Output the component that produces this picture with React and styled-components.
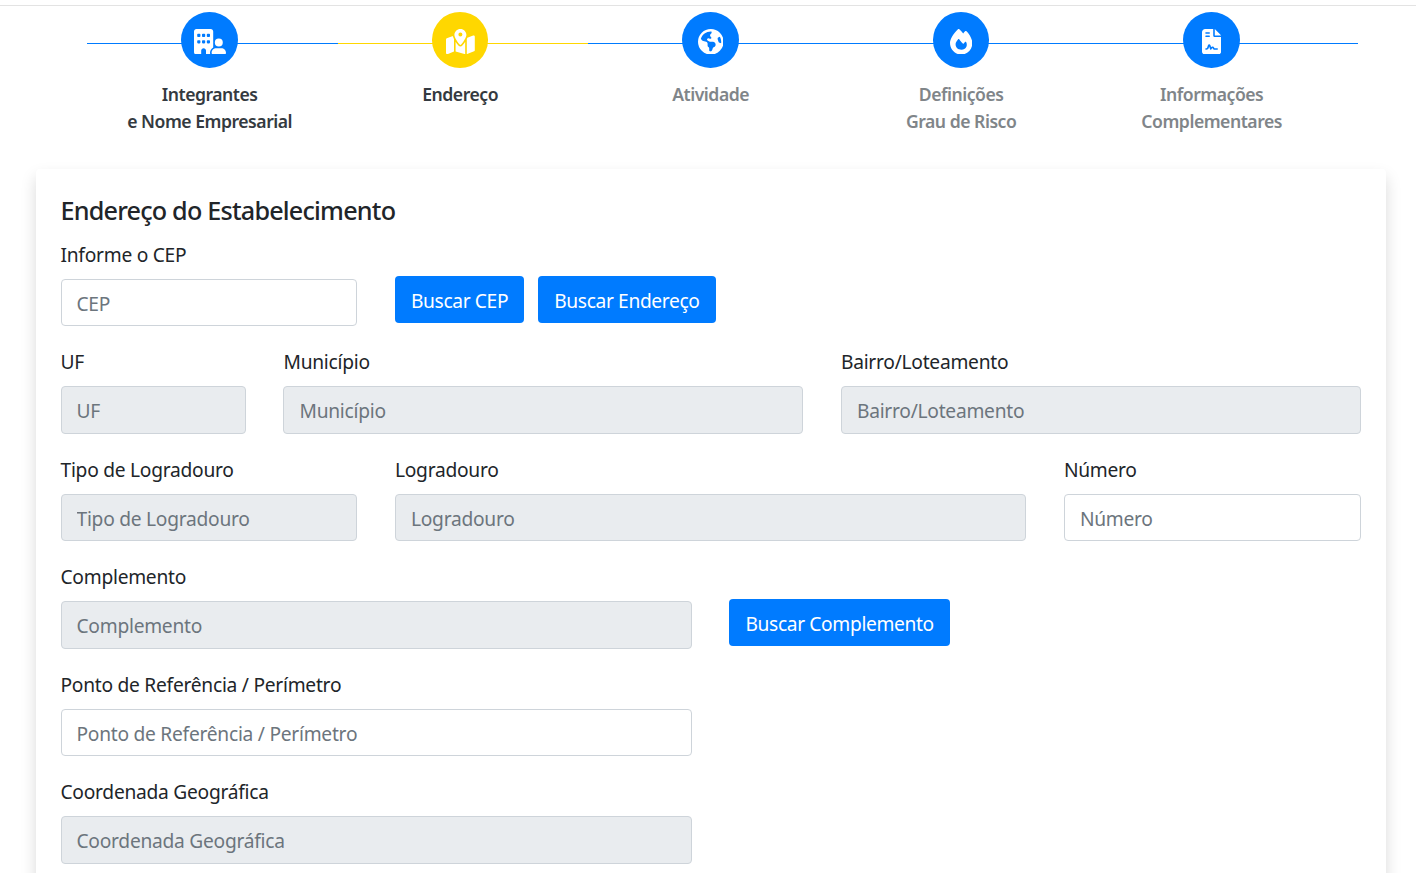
import React from "react";
import styled, { createGlobalStyle } from "styled-components";
import {
  FaBuildingUser,
  FaMapLocationDot,
  FaEarthAmericas,
  FaFire,
  FaFileContract,
} from "react-icons/fa6";

const Global = createGlobalStyle`
  html, body {
    margin: 0;
    padding: 0;
    background: #fff;
    height: 873px;
    overflow: hidden;
    font-family: "Noto Sans", "Open Sans", sans-serif;
    color: #212529;
  }
  * { box-sizing: border-box; }
`;

const TopBar = styled.div`
  height: 6px;
  border-bottom: 1px solid #e3e3e3;
`;

const Steps = styled.div`
  display: flex;
  padding: 6px 0 0 84.4px;
  height: 163px;
`;

const Step = styled.div`
  position: relative;
  width: 250.5px;
  display: flex;
  flex-direction: column;
  align-items: center;
  &::before {
    content: "";
    position: absolute;
    top: 31px;
    left: 2.9px;
    width: ${(p) => (p.$last ? "269px" : "250.5px")};
    height: 1px;
    background: ${(p) => (p.$current ? "#ffd700" : "#007bff")};
  }
`;

const Circle = styled.div`
  position: relative;
  width: 56.5px;
  height: 56px;
  padding-top: 3px;
  border-radius: 50%;
  background: ${(p) => (p.$current ? "#ffd700" : "#007bff")};
  color: #fff;
  display: flex;
  align-items: center;
  justify-content: center;
  svg {
    flex: none;
    width: ${(p) => p.$iconWidth}px;
    height: 25.6px;
  }
`;

const StepLabel = styled.div`
  margin-top: 13px;
  font-size: 17.6px;
  line-height: 27px;
  font-weight: 600;
  letter-spacing: -0.48px;
  text-align: center;
  color: ${(p) => (p.$muted ? "#808589" : "#343a40")};
`;

const Card = styled.div`
  margin: 0 30px 0 35.5px;
  height: 760px;
  padding: 25px 25.1px 25px 25px;
  background: #fff;
  border-radius: 4px;
  box-shadow: 0 8px 16px rgba(0, 0, 0, 0.15);
`;

const Title = styled.h2`
  margin: 0 0 12.5px;
  font-size: 25.2px;
  line-height: 33px;
  font-weight: 500;
  letter-spacing: -0.8px;
`;

const Row = styled.div`
  display: grid;
  grid-template-columns: repeat(12, 1fr);
  column-gap: 37.5px;
  margin-bottom: 21px;
`;

const Field = styled.div`
  grid-column: span ${(p) => p.$span};
  display: flex;
  flex-direction: column;
`;

const Label = styled.label`
  height: 29px;
  margin-bottom: 10px;
  font-size: 19.2px;
  line-height: 29px;
  letter-spacing: -0.26px;
`;

const Input = styled.input`
  width: 100%;
  height: 47.5px;
  padding: 2px 15px 0;
  font: inherit;
  font-size: 19.2px;
  letter-spacing: -0.26px;
  color: #495057;
  background: ${(p) => (p.disabled ? "#e9ecef" : "#fff")};
  border: 1px solid #ced4da;
  border-radius: 4px;
  &::placeholder {
    color: #6c757d;
    opacity: 1;
  }
`;

const Actions = styled.div`
  grid-column: span ${(p) => p.$span};
  display: flex;
  gap: 14px;
  padding-top: 36.5px;
`;

const Button = styled.button`
  height: 47px;
  padding: 2px 16px 0;
  font: inherit;
  font-size: 19.2px;
  letter-spacing: -0.36px;
  color: #fff;
  background: #007bff;
  border: 0;
  border-radius: 4px;
  white-space: nowrap;
`;

const steps = [
  { icon: FaBuildingUser, iconWidth: 32, label: ["Integrantes", "e Nome Empresarial"] },
  { icon: FaMapLocationDot, iconWidth: 28.8, label: ["Endereço"], current: true },
  { icon: FaEarthAmericas, iconWidth: 25.6, label: ["Atividade"], muted: true },
  { icon: FaFire, iconWidth: 22.4, label: ["Definições", "Grau de Risco"], muted: true },
  { icon: FaFileContract, iconWidth: 19.2, label: ["Informações", "Complementares"], muted: true },
];

const FormField = ({ span, label, disabled }) => (
  <Field $span={span}>
    <Label>{label}</Label>
    <Input placeholder={label} disabled={disabled} />
  </Field>
);

export default function App() {
  return (
    <>
      <Global />
      <TopBar />
      <Steps>
        {steps.map((s, i) => (
          <Step key={s.label[0]} $current={s.current} $last={i === steps.length - 1}>
            <Circle $current={s.current} $iconWidth={s.iconWidth}>
              <s.icon />
            </Circle>
            <StepLabel $muted={s.muted}>
              {s.label.map((l) => (
                <div key={l}>{l}</div>
              ))}
            </StepLabel>
          </Step>
        ))}
      </Steps>
      <Card>
        <Title>Endereço do Estabelecimento</Title>
        <Row>
          <Field $span={3}>
            <Label>Informe o CEP</Label>
            <Input placeholder="CEP" />
          </Field>
          <Actions $span={6}>
            <Button>Buscar CEP</Button>
            <Button>Buscar Endereço</Button>
          </Actions>
        </Row>
        <Row>
          <FormField span={2} label="UF" disabled />
          <FormField span={5} label="Município" disabled />
          <FormField span={5} label="Bairro/Loteamento" disabled />
        </Row>
        <Row>
          <FormField span={3} label="Tipo de Logradouro" disabled />
          <FormField span={6} label="Logradouro" disabled />
          <FormField span={3} label="Número" />
        </Row>
        <Row>
          <FormField span={6} label="Complemento" disabled />
          <Actions $span={6}>
            <Button>Buscar Complemento</Button>
          </Actions>
        </Row>
        <Row>
          <FormField span={6} label="Ponto de Referência / Perímetro" />
        </Row>
        <Row>
          <FormField span={6} label="Coordenada Geográfica" disabled />
        </Row>
      </Card>
    </>
  );
}
